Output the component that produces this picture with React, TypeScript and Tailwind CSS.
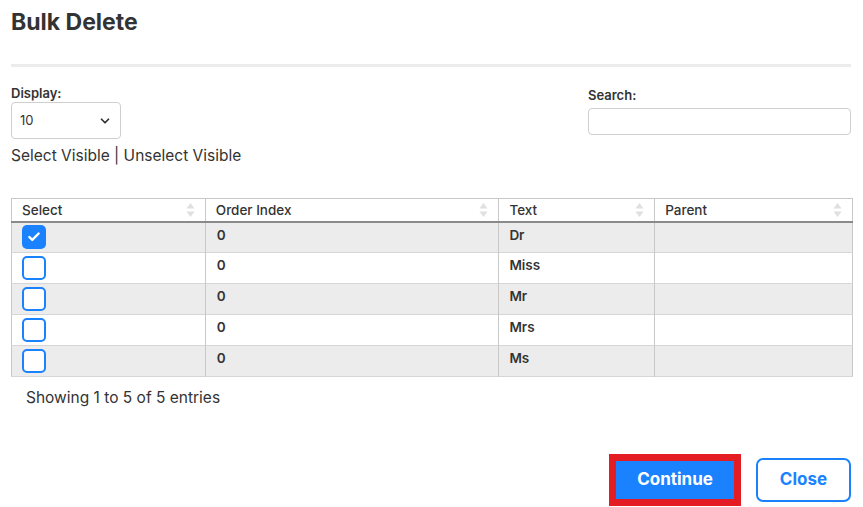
import { ChevronDown, Check } from "lucide-react";

const rows = [
  { checked: true, index: "0", text: "Dr", parent: "" },
  { checked: false, index: "0", text: "Miss", parent: "" },
  { checked: false, index: "0", text: "Mr", parent: "" },
  { checked: false, index: "0", text: "Mrs", parent: "" },
  { checked: false, index: "0", text: "Ms", parent: "" },
];

const SortIcon = () => (
  <svg width="9" height="16" viewBox="0 0 9 16" className="shrink-0">
    <path d="M4.5 1 L8.5 6.5 H0.5 Z" fill="#e0e0e0" />
    <path d="M4.5 15 L8.5 9.5 H0.5 Z" fill="#e0e0e0" />
  </svg>
);

const HeaderCell = ({ label, className }: { label: string; className: string }) => (
  <th className={`${className} border-r border-[#c8c8c8] last:border-r-0 px-[10px] font-medium text-left`}>
    <div className="flex items-center justify-between">
      <span>{label}</span>
      <SortIcon />
    </div>
  </th>
);

const App = () => {
  return (
    <div
      className="w-[863px] h-[507px] bg-white text-[#333] px-[11px] overflow-hidden"
      style={{ fontFamily: "Inter, 'Noto Sans', sans-serif" }}
    >
      <h1 className="pt-[7px] h-[37px] text-[23px] leading-[30px] font-bold text-[#333]">
        Bulk Delete
      </h1>
      <div className="mt-[27px] h-[3px] w-[840px] bg-[#ececec]" />

      <div className="flex justify-between w-[840px]">
        {/* Display */}
        <div className="pt-[17px]">
          <div className="text-[13px] leading-[18px] font-semibold">Display:</div>
          <div className="w-[110px] h-[37px] border border-[#cfcfcf] rounded-[4px] flex items-center justify-between px-[8px]">
            <span className="text-[13px]">10</span>
            <ChevronDown className="size-[14px] text-[#333]" strokeWidth={3} />
          </div>
          <div className="mt-[6px] text-[15.5px] leading-[22px]">
            Select Visible | Unselect Visible
          </div>
        </div>

        {/* Search */}
        <div className="pt-[19px] w-[263px]">
          <div className="text-[13px] leading-[18px] font-semibold">Search:</div>
          <div className="mt-[4px] h-[27px] border border-[#cfcfcf] rounded-[4px]" />
        </div>
      </div>

      <table className="mt-[31px] w-[842px] border border-[#c8c8c8] border-collapse text-[13.5px]">
        <thead>
          <tr className="h-[23px] border-b-2 border-[#8a8a8a]">
            <HeaderCell label="Select" className="w-[194px]" />
            <HeaderCell label="Order Index" className="w-[294px]" />
            <HeaderCell label="Text" className="w-[156px]" />
            <HeaderCell label="Parent" className="w-[198px]" />
          </tr>
        </thead>
        <tbody>
          {rows.map((row, i) => (
            <tr
              key={i}
              className={`h-[31px] border-b border-[#d6d6d6] ${i % 2 === 0 ? "bg-[#ebeceb]" : "bg-white"}`}
            >
              <td className="border-r border-[#c8c8c8] px-[10px] py-0 align-middle">
                {row.checked ? (
                  <div className="size-[24px] rounded-[5px] bg-[#1a82ff] flex items-center justify-center">
                    <Check className="size-[14px] text-white" strokeWidth={4} />
                  </div>
                ) : (
                  <div className="size-[24px] rounded-[5px] border-2 border-[#1a82ff] bg-white" />
                )}
              </td>
              <td className="border-r border-[#c8c8c8] px-[11px] align-top pt-[2px] font-semibold">
                {row.index}
              </td>
              <td className="border-r border-[#c8c8c8] px-[10px] align-top pt-[2px] font-semibold">
                {row.text}
              </td>
              <td className="px-[10px]">{row.parent}</td>
            </tr>
          ))}
        </tbody>
      </table>

      <div className="mt-[10px] pl-[15px] text-[15.5px] leading-[22px]">
        Showing 1 to 5 of 5 entries
      </div>

      <div className="mt-[45px] flex justify-end items-center gap-[15px] w-[840px]">
        <div className="border-[7px] border-[#e41c23]">
          <button className="w-[118px] h-[38px] bg-[#1a82ff] text-white text-[17px] font-bold">
            Continue
          </button>
        </div>
        <button className="w-[95px] h-[44px] border-2 border-[#1a82ff] rounded-[7px] text-[#1a82ff] text-[17px] font-bold bg-white">
          Close
        </button>
      </div>
    </div>
  );
};

export default App;
